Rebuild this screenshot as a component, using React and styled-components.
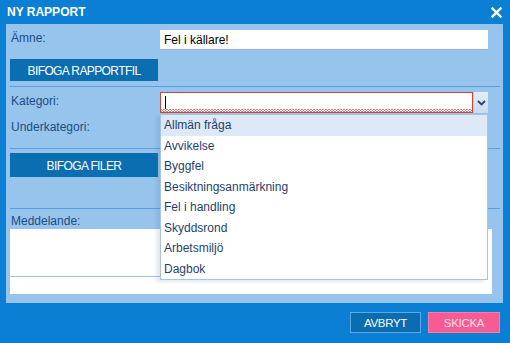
import styled, { createGlobalStyle } from "styled-components";

const GlobalStyle = createGlobalStyle`
	html, body {
		margin: 0;
		padding: 0;
		background: #0a7fd4;
	}
	* {
		box-sizing: border-box;
	}
`;

const categories = [
	"Allmän fråga",
	"Avvikelse",
	"Byggfel",
	"Besiktningsanmärkning",
	"Fel i handling",
	"Skyddsrond",
	"Arbetsmiljö",
	"Dagbok",
];

const App = () => {
	return (
		<>
			<GlobalStyle />
			<Dialog>
				<TitleBar>
					<Title>NY RAPPORT</Title>
					<CloseButton aria-label='Stäng'>
						<svg width='11' height='11' viewBox='0 0 11 11'>
							<path
								d='M1.5 1.5 L9.5 9.5 M9.5 1.5 L1.5 9.5'
								stroke='#fff'
								strokeWidth='2.4'
								strokeLinecap='square'
							/>
						</svg>
					</CloseButton>
				</TitleBar>

				<Panel>
					<FieldRow $top={5}>
						<Label>Ämne:</Label>
						<TextInput>Fel i källare!</TextInput>
					</FieldRow>

					<WideButton $top={9} $height={22}>
						BIFOGA RAPPORTFIL
					</WideButton>

					<Separator $top={5} />

					<FieldRow $top={5}>
						<Label>Kategori:</Label>
						<SelectWrap>
							<SelectBox>
								<Caret />
							</SelectBox>
							<SelectArrow>
								<svg width='9' height='6' viewBox='0 0 9 6'>
									<path
										d='M1 1 L4.5 4.5 L8 1'
										fill='none'
										stroke='#27476b'
										strokeWidth='1.8'
									/>
								</svg>
							</SelectArrow>
							<Menu>
								{categories.map((c, i) => (
									<MenuItem key={c} $active={i === 0}>
										{c}
									</MenuItem>
								))}
							</Menu>
						</SelectWrap>
					</FieldRow>

					<FieldRow $top={5}>
						<Label>Underkategori:</Label>
					</FieldRow>

					<Separator $top={9} />

					<WideButton $top={4} $height={24}>
						BIFOGA FILER
					</WideButton>

					<Separator $top={31} />

					<MessageLabel>Meddelande:</MessageLabel>
					<MessageBox>
						<MessageArea />
					</MessageBox>
				</Panel>

				<Footer>
					<FooterButton>AVBRYT</FooterButton>
					<FooterButton $primary>SKICKA</FooterButton>
				</Footer>
			</Dialog>
		</>
	);
};

const Dialog = styled.div`
	width: 510px;
	height: 343px;
	background: #0a7fd4;
	font-family: "Liberation Sans", Arial, sans-serif;
	display: flex;
	flex-direction: column;
	overflow: hidden;
`;

const TitleBar = styled.div`
	height: 24px;
	display: flex;
	align-items: center;
	justify-content: space-between;
	padding: 0 8px 0 7px;
`;

const Title = styled.div`
	color: #fff;
	font-weight: bold;
	font-size: 12px;
`;

const CloseButton = styled.div`
	width: 11px;
	height: 11px;
	display: flex;
	margin-top: 1px;
`;

const Panel = styled.div`
	margin: 0 7px 0 6px;
	height: 279px;
	background: #97c4ec;
	padding: 0 3px 0 4px;
	display: flex;
	flex-direction: column;
`;

const FieldRow = styled.div`
	display: flex;
	align-items: center;
	height: 21px;
	margin-top: ${(p) => p.$top}px;
`;

const Label = styled.div`
	width: 150px;
	flex: none;
	color: #1c4d85;
	font-size: 12px;
	padding-left: 1px;
	align-self: flex-start;
	padding-top: 2px;
`;

const TextInput = styled.div`
	width: 328px;
	height: 20px;
	background: #fff;
	border-bottom: 1px solid #8fb4d8;
	font-size: 12px;
	color: #000;
	padding: 3px 4px;
`;

const WideButton = styled.div`
	width: 148px;
	height: ${(p) => p.$height}px;
	margin-top: ${(p) => p.$top}px;
	background: #0b6eb0;
	color: #fff;
	font-size: 12px;
	letter-spacing: -0.6px;
	display: flex;
	align-items: center;
	justify-content: center;
	padding-top: 1px;
`;

const Separator = styled.div`
	height: 1px;
	width: 490px;
	margin-top: ${(p) => p.$top}px;
	background: #5a9ee0;
`;

const SelectWrap = styled.div`
	position: relative;
	display: flex;
	width: 328px;
	height: 21px;
`;

const SelectBox = styled.div`
	width: 313px;
	height: 21px;
	background-color: #fff;
	border: 1px solid #c6493c;
	position: relative;
	padding: 3px 3px;
	&::after {
		content: "";
		position: absolute;
		left: 0;
		right: 0;
		bottom: 0;
		height: 3px;
		background:
			linear-gradient(135deg, transparent 40%, #e0766c 40%, #e0766c 60%, transparent 60%) 0 0 / 3px 3px repeat-x,
			linear-gradient(45deg, transparent 40%, #e0766c 40%, #e0766c 60%, transparent 60%) 0 0 / 3px 3px repeat-x;
	}
`;

const Caret = styled.div`
	width: 1px;
	height: 13px;
	background: #000;
	margin-left: 1px;
`;

const SelectArrow = styled.div`
	width: 15px;
	height: 21px;
	background: linear-gradient(#e3edf7, #c9dbee);
	border-left: 1px solid #b8cde2;
	display: flex;
	align-items: center;
	justify-content: center;
`;

const Menu = styled.div`
	position: absolute;
	top: 22px;
	left: 0;
	width: 328px;
	background: #fff;
	border: 1px solid #a9c3dd;
	box-shadow: -4px 2px 3px rgba(80, 110, 140, 0.15);
	z-index: 5;
`;

const MenuItem = styled.div`
	height: 20.5px;
	line-height: 20.5px;
	padding-left: 3px;
	font-size: 12px;
	color: #1f3f6e;
	background: ${(p) => (p.$active ? "#dde9f6" : "#fff")};
`;

const MessageLabel = styled.div`
	color: #1c4d85;
	font-size: 12px;
	padding: 5px 0 0 1px;
	height: 20px;
`;

const MessageBox = styled.div`
	width: 482px;
	height: 65px;
	background: #fff;
`;

const MessageArea = styled.div`
	width: 478px;
	height: 48px;
	border-right: 1px solid #a8c2de;
	border-bottom: 1px solid #a8c2de;
`;

const Footer = styled.div`
	flex: 1;
	display: flex;
	justify-content: flex-end;
	align-items: flex-start;
	gap: 7px;
	padding: 9px 10px 0 0;
`;

const FooterButton = styled.div`
	width: ${(p) => (p.$primary ? 72 : 71)}px;
	height: 21px;
	display: flex;
	align-items: center;
	justify-content: center;
	font-size: 11.5px;
	letter-spacing: -0.3px;
	background: ${(p) => (p.$primary ? "#f65b92" : "#0c6cb0")};
	color: ${(p) => (p.$primary ? "#fde0ea" : "#fff")};
	border: 1px solid ${(p) => (p.$primary ? "#f77ea9" : "#5aaaea")};
`;

export default App;
